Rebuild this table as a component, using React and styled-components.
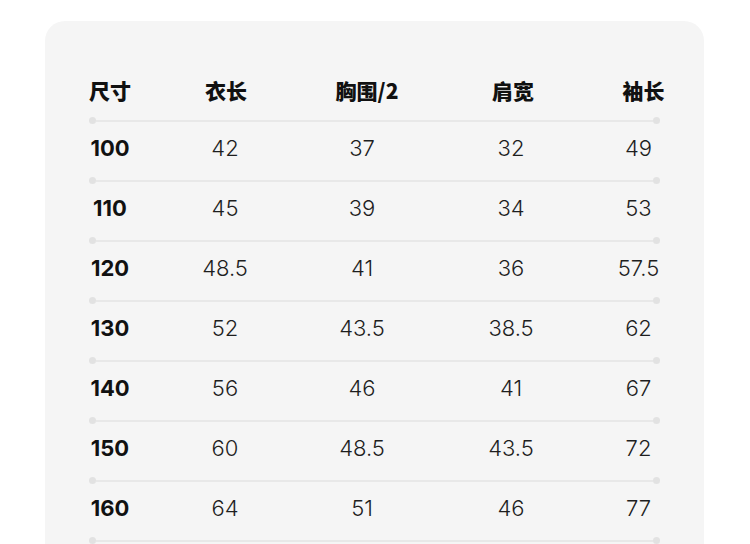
import React from "react";
import styled, { createGlobalStyle } from "styled-components";

const Global = createGlobalStyle`
  html, body { margin: 0; padding: 0; background: #ffffff; }
  body { font-family: Inter, "Noto Sans CJK SC", sans-serif; }
`;

const Page = styled.div`
  width: 750px;
  height: 544px;
  overflow: hidden;
  background: #ffffff;
  padding: 21px 46px 0 45px;
  box-sizing: border-box;
`;

const Card = styled.div`
  background: #f5f5f5;
  border-radius: 20px 20px 0 0;
  padding: 0 44px 40px 44px;
  min-height: 600px;
  box-sizing: border-box;
`;

const COLS = [42, 188, 86, 212, 43];

const Row = styled.div`
  display: flex;
  height: ${(p) => (p.$head ? 96 : 53)}px;
  box-sizing: border-box;
  padding-bottom: ${(p) => (p.$head ? 16 : 6)}px;
  align-items: ${(p) => (p.$head ? "flex-end" : "center")};
`;

const Cell = styled.div`
  flex: 0 0 ${(p) => p.$w}px;
  display: flex;
  justify-content: center;
  white-space: nowrap;
  line-height: ${(p) => (p.$head ? "21px" : "22px")};
`;

const HeadText = styled.span`
  font-family: "Noto Sans CJK SC", Inter, sans-serif;
  font-weight: 900;
  font-size: 21px;
  color: #111111;
  position: relative;
  left: ${(p) => p.$shift || 0}px;
`;

const Value = styled.span`
  font-family: Inter, "Noto Sans", sans-serif;
  font-size: 22px;
  font-weight: ${(p) => (p.$bold ? 700 : 300)};
  color: ${(p) => (p.$bold ? "#111111" : "#1e1e1e")};
`;

const Divider = styled.div`
  display: flex;
  align-items: center;
  height: 7px;
`;

const Dot = styled.span`
  width: 7px;
  height: 7px;
  border-radius: 50%;
  background: #e2e2e2;
  flex: 0 0 7px;
`;

const Line = styled.span`
  flex: 1;
  height: 2px;
  background: #e8e8e8;
`;

const headers = [
  { t: "尺寸", s: 0 },
  { t: "衣长", s: 1 },
  { t: "胸围/2", s: 5 },
  { t: "肩宽", s: 2 },
  { t: "袖长", s: 5 },
];

const data = [
  ["100", "42", "37", "32", "49"],
  ["110", "45", "39", "34", "53"],
  ["120", "48.5", "41", "36", "57.5"],
  ["130", "52", "43.5", "38.5", "62"],
  ["140", "56", "46", "41", "67"],
  ["150", "60", "48.5", "43.5", "72"],
  ["160", "64", "51", "46", "77"],
];

const Sep = () => (
  <Divider>
    <Dot />
    <Line />
    <Dot />
  </Divider>
);

export default function App() {
  return (
    <>
      <Global />
      <Page>
        <Card>
          <Row $head>
            {headers.map((h, i) => (
              <Cell key={i} $w={COLS[i]} $head>
                <HeadText $shift={h.s}>{h.t}</HeadText>
              </Cell>
            ))}
          </Row>
          <Sep />
          {data.map((r, ri) => (
            <React.Fragment key={ri}>
              <Row>
                {r.map((v, i) => (
                  <Cell key={i} $w={COLS[i]}>
                    <Value $bold={i === 0}>{v}</Value>
                  </Cell>
                ))}
              </Row>
              <Sep />
            </React.Fragment>
          ))}
        </Card>
      </Page>
    </>
  );
}
